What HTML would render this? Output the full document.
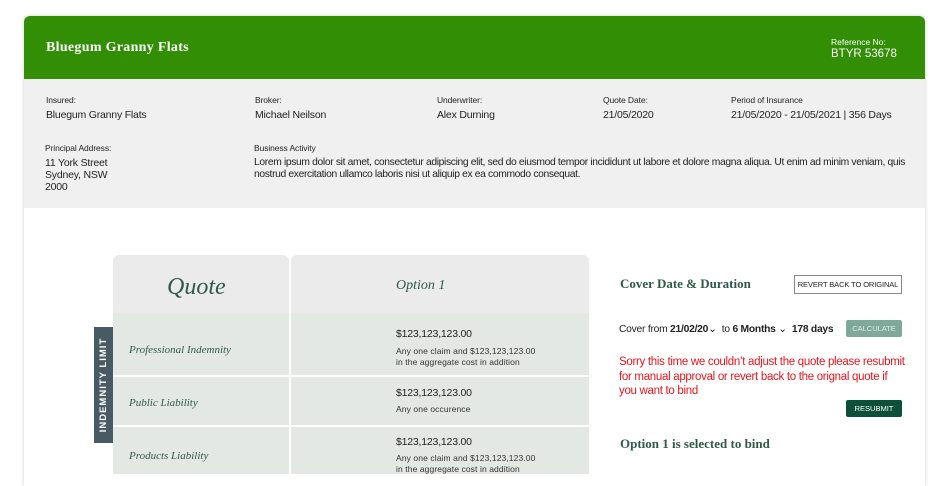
<!DOCTYPE html>
<html><head><style>
*{margin:0;padding:0;box-sizing:border-box}
body{width:944px;height:474px;background:#fff;font-family:"Liberation Sans",sans-serif;color:#222;position:relative;overflow:hidden;white-space:nowrap}
.card{position:absolute;left:24px;top:16px;width:901px;height:470px;border-radius:6px 6px 0 0;box-shadow:0 0 4px rgba(0,0,0,.18);background:#fff;overflow:hidden}
.hdr{position:absolute;left:0;top:0;width:901px;height:63px;background:#318e05;color:#fff}
.a{position:absolute}
.grey{position:absolute;left:0;top:63px;width:901px;height:129px;background:#f0f0f0}
.lbl{font-size:8.5px;color:#222;letter-spacing:-.1px}
.val{font-size:10.5px;color:#222;line-height:12px;letter-spacing:-.2px}
.serif{font-family:"Liberation Serif",serif}
.cell{position:absolute;background:#e4e8e5}
.it{font-family:"Liberation Serif",serif;font-style:italic;color:#2f5a48;font-size:12px}
.amt{font-size:10.5px;letter-spacing:-.2px}
.sm{font-size:8.5px;line-height:11px;color:#333;letter-spacing:.1px}
</style></head><body>
<div class="card">
<div class="hdr">
<div class="a serif" style="left:22px;top:24px;font-size:14px;font-weight:bold;letter-spacing:.3px">Bluegum Granny Flats</div>
<div class="a" style="left:807px;top:21px;font-size:8.5px">Reference No:</div>
<div class="a" style="left:807px;top:32px;font-size:11.5px">BTYR 53678</div>
</div>
<div class="grey">
<div class="a lbl" style="left:22px;top:16px">Insured:</div>
<div class="a val" style="left:22px;top:30px">Bluegum Granny Flats</div>
<div class="a lbl" style="left:231px;top:16px">Broker:</div>
<div class="a val" style="left:231px;top:30px">Michael Neilson</div>
<div class="a lbl" style="left:413px;top:16px">Underwriter:</div>
<div class="a val" style="left:413px;top:30px">Alex Durning</div>
<div class="a lbl" style="left:579px;top:16px">Quote Date:</div>
<div class="a val" style="left:579px;top:30px">21/05/2020</div>
<div class="a lbl" style="left:707px;top:16px">Period of Insurance</div>
<div class="a val" style="left:707px;top:30px">21/05/2020 - 21/05/2021 | 356 Days</div>
<div class="a lbl" style="left:21px;top:64px">Principal Address:</div>
<div class="a val" style="left:21px;top:78px">11 York Street<br>Sydney, NSW<br>2000</div>
<div class="a lbl" style="left:230px;top:64px">Business Activity</div>
<div class="a val" style="left:230px;top:78px;letter-spacing:-.35px;font-size:10.3px">Lorem ipsum dolor sit amet, consectetur adipiscing elit, sed do eiusmod tempor incididunt ut labore et dolore magna aliqua. Ut enim ad minim veniam, quis<br>nostrud exercitation ullamco laboris nisi ut aliquip ex ea commodo consequat.</div>
</div>
</div>
<div class="cell" style="left:113px;top:255px;width:176px;height:58px;background:#ebebeb;border-radius:6px 6px 0 0"></div>
<div class="cell" style="left:291px;top:255px;width:298px;height:58px;background:#ebebeb;border-radius:6px 6px 0 0"></div>
<div class="cell" style="left:113px;top:313px;width:176px;height:62px"></div>
<div class="cell" style="left:291px;top:313px;width:298px;height:62px"></div>
<div class="cell" style="left:113px;top:377px;width:176px;height:48px"></div>
<div class="cell" style="left:291px;top:377px;width:298px;height:48px"></div>
<div class="cell" style="left:113px;top:427px;width:176px;height:47px"></div>
<div class="cell" style="left:291px;top:427px;width:298px;height:47px"></div>
<div class="a it" style="left:167px;top:274px;font-size:24px">Quote</div>
<div class="a it" style="left:396px;top:278px;font-size:14px">Option 1</div>
<div class="a" style="left:94px;top:327px;width:19px;height:116px;background:#485a64"></div>
<div class="a" style="left:94px;top:327px;width:116px;height:19px;transform-origin:0 0;transform:translate(0,116px) rotate(-90deg);color:#fff;font-weight:bold;font-size:9.5px;letter-spacing:1px;text-align:center;line-height:19px">INDEMNITY LIMIT</div>
<div class="a it" style="left:129px;top:344px;font-size:11px">Professional Indemnity</div>
<div class="a it" style="left:129px;top:397px;font-size:11px">Public Liability</div>
<div class="a it" style="left:129px;top:450px;font-size:11px">Products Liability</div>
<div class="a amt" style="left:396px;top:328px">$123,123,123.00</div>
<div class="a sm" style="left:396px;top:346px">Any one claim and $123,123,123.00<br>in the aggregate cost in addition</div>
<div class="a amt" style="left:396px;top:387px">$123,123,123.00</div>
<div class="a sm" style="left:396px;top:404px">Any one occurence</div>
<div class="a amt" style="left:396px;top:436px">$123,123,123.00</div>
<div class="a sm" style="left:396px;top:453px">Any one claim and $123,123,123.00<br>in the aggregate cost in addition</div>
<div class="a serif" style="left:620px;top:276px;font-size:13px;font-weight:bold;color:#2f5a48">Cover Date &amp; Duration</div>
<div class="a" style="left:794px;top:275px;width:108px;height:19px;border:1px solid #888;font-size:7.5px;text-align:center;line-height:17px;letter-spacing:-.1px">REVERT BACK TO ORIGINAL</div>
<div class="a" style="left:619px;top:323px;font-size:10.3px;letter-spacing:-.25px">Cover from <b>21/02/20</b>&#8964; &nbsp;to <b>6 Months</b> &#8964; &nbsp;<b>178 days</b></div>
<div class="a" style="left:846px;top:320px;width:56px;height:17px;background:#7fa89a;color:#dfece7;font-size:7.5px;text-align:center;line-height:17px;border-radius:2px">CALCULATE</div>
<div class="a" style="left:619px;top:355px;font-size:11.5px;line-height:14.5px;color:#e8141c;letter-spacing:-.3px">Sorry this time we couldn’t adjust the quote please resubmit<br>for manual approval or revert back to the orignal quote if<br>you want to bind</div>
<div class="a" style="left:846px;top:400px;width:56px;height:17px;background:#0d503a;color:#fff;font-size:7.5px;text-align:center;line-height:17px;border-radius:2px">RESUBMIT</div>
<div class="a serif" style="left:620px;top:436px;font-size:13px;font-weight:bold;color:#2f5a48">Option 1 is selected to bind</div>
</body></html>
